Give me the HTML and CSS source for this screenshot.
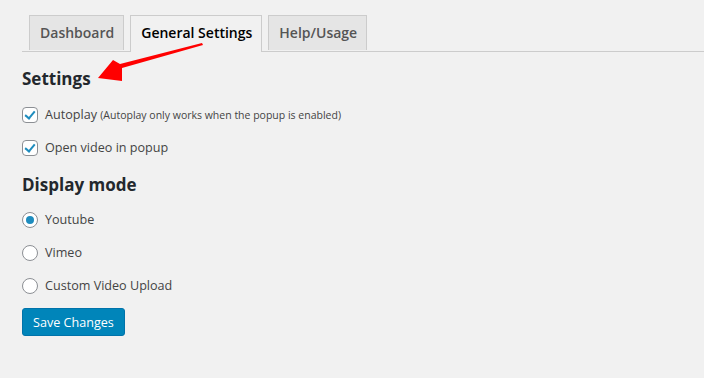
FILE: index.html
```html
<!DOCTYPE html>
<html lang="en">
	<head>
		<meta charset="UTF-8" />
		<title>General Settings</title>
		<link rel="stylesheet" href="styles.css">
	</head>
	<body>
		<div class="wrap">
			<div class="tabs">
				<a class="tab">Dashboard</a>
				<a class="tab active">General Settings</a>
				<a class="tab">Help/Usage</a>
			</div>
			<h2>Settings</h2>
			<label class="row">
				<span class="check on"></span>
				<span>Autoplay <small>(Autoplay only works when the popup is enabled)</small></span>
			</label>
			<label class="row">
				<span class="check on"></span>
				<span>Open video in popup</span>
			</label>
			<h2 class="mode">Display mode</h2>
			<label class="row">
				<span class="radio on"></span>
				<span>Youtube</span>
			</label>
			<label class="row">
				<span class="radio"></span>
				<span>Vimeo</span>
			</label>
			<label class="row">
				<span class="radio"></span>
				<span>Custom Video Upload</span>
			</label>
			<button>Save Changes</button>

			<!-- annotation arrow -->
			<svg class="arrow" width="704" height="120" viewBox="0 0 704 120">
				<path d="M202 43 L203 45 L122 68 L122 81 L98 78 L113 60 L120 64 Z" fill="#ff0000" />
			</svg>
		</div>
	</body>
</html>
```

FILE: styles.css
```css
body {
	margin: 0;
	background: #f1f1f1;
	color: #444;
	font-family: "Open Sans", "Noto Sans", sans-serif;
	font-size: 12.6px;
}
.wrap {
	position: relative;
	padding: 15px 0 0 22px;
}
.tabs {
	display: flex;
	gap: 6px;
	padding-left: 7px;
	border-bottom: 1px solid #ccc;
	height: 36px;
}
.tab {
	display: block;
	height: 35px;
	line-height: 34px;
	padding: 0 9px 0 10px;
	border: 1px solid #ccc;
	border-bottom: 0;
	background: #e5e5e5;
	color: #555;
	font-size: 14px;
	font-weight: 600;
	box-sizing: border-box;
}
.tab.active {
	background: #f1f1f1;
	color: #000;
	height: 37px;
	margin-bottom: -1px;
}
h2 {
	margin: 15px 0 16px;
	font-size: 17px;
	font-weight: 700;
	color: #23282d;
	line-height: 24px;
}
h2.mode {
	margin: 13px 0 15px;
}
.row {
	display: flex;
	align-items: center;
	gap: 7px;
	height: 16px;
	margin-bottom: 17px;
	line-height: 16px;
}
.row small {
	font-size: 10.5px;
}
.check,
.radio {
	width: 16px;
	height: 16px;
	box-sizing: border-box;
	border: 1px solid #8c8f94;
	background: #fff;
	border-radius: 4px;
	position: relative;
	flex: 0 0 auto;
}
.radio {
	border-radius: 50%;
}
.check.on::after {
	content: "";
	position: absolute;
	left: 4px;
	top: 1px;
	width: 4px;
	height: 8px;
	border: solid #1e8cbe;
	border-width: 0 2px 2px 0;
	transform: rotate(40deg);
}
.radio.on::after {
	content: "";
	position: absolute;
	left: 3px;
	top: 3px;
	width: 8px;
	height: 8px;
	border-radius: 50%;
	background: #1e8cbe;
}
button {
	display: block;
	margin-top: -3px;
	height: 28px;
	padding: 0 10px;
	background: #0085ba;
	border: 1px solid #0073aa;
	border-radius: 3px;
	color: #fff;
	font-family: inherit;
	font-size: 12.6px;
}
.arrow {
	position: absolute;
	left: 0;
	top: 0;
	pointer-events: none;
}
```
